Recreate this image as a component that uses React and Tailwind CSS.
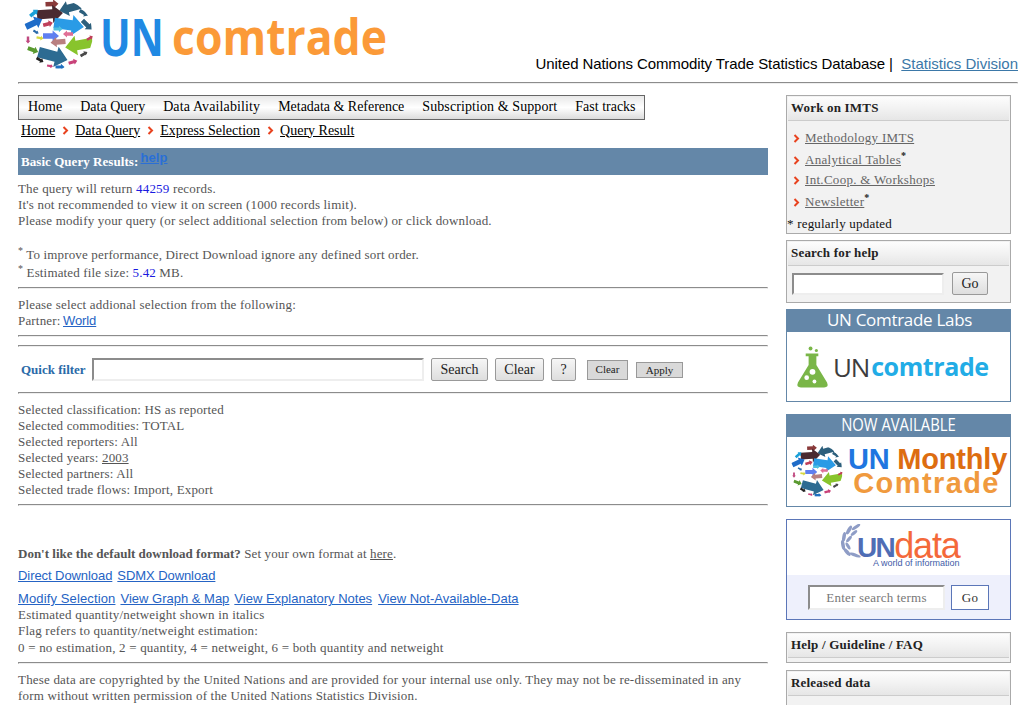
import React from 'react'

function Rule({ className = '' }) {
  return <div className={`h-[2px] border border-[#8c8c8c] border-r-[#ddd] border-b-[#eee] ${className}`} />
}

function Chevron({ className = '' }) {
  return (
    <svg viewBox="0 0 7 9" className={`w-[7px] h-[9px] shrink-0 ${className}`}>
      <path d="M1.5 1 L5 4.5 L1.5 8" fill="none" stroke="#e8431f" strokeWidth="2" />
    </svg>
  )
}

function Arrow({ x, y, s = 1, r = 0, fill }) {
  return (
    <path
      transform={`translate(${x} ${y}) rotate(${r}) scale(${s})`}
      d="M-10 -3.5 L2 -3.5 L2 -7 L10 0 L2 7 L2 3.5 L-10 3.5 Z"
      fill={fill}
    />
  )
}

// page coordinates of the logo, 80x72 box from the left of the header
function Globe({ className = '' }) {
  return (
    <svg viewBox="0 0 80 72" className={className}>
      <clipPath id="globe-clip"><circle cx="38" cy="34" r="35" /></clipPath>
      <g clipPath="url(#globe-clip)">
        <Arrow x={32} y={4} s={0.65} r={-3} fill="#8a3a3a" />
        <Arrow x={50} y={8} s={1.1} r={165} fill="#2c5f7c" />
        <Arrow x={30} y={14} s={1.3} r={-4} fill="#4a2a30" />
        <Arrow x={14} y={13} s={0.5} r={-40} fill="#1aa0d8" />
        <Arrow x={14} y={23} s={0.9} r={-25} fill="#1f6cc8" />
        <Arrow x={64} y={13} s={0.5} r={30} fill="#2c5f7c" />
        <Arrow x={49} y={25} s={1.5} r={8} fill="#2a9be6" />
        <Arrow x={67} y={25} s={0.65} r={45} fill="#2c5f7c" />
        <Arrow x={28} y={24} s={0.5} r={-15} fill="#c0405a" />
        <Arrow x={38} y={29} s={0.45} r={0} fill="#4fc0e0" />
        <Arrow x={31} y={36} s={0.8} r={0} fill="#5f7ff0" />
        <Arrow x={48} y={34} s={0.5} r={180} fill="#e06f95" />
        <Arrow x={16} y={32} s={0.3} r={30} fill="#2a6aa8" />
        <Arrow x={8} y={40} s={0.35} r={90} fill="#c04a80" />
        <Arrow x={20} y={38} s={0.35} r={10} fill="#d8d840" />
        <Arrow x={38} y={42} s={0.75} r={175} fill="#b98080" />
        <Arrow x={59} y={45} s={1.4} r={170} fill="#88c42c" />
        <Arrow x={13} y={50} s={0.55} r={20} fill="#5a9a30" />
        <Arrow x={33} y={56} s={1.5} r={15} fill="#2d6b92" />
        <Arrow x={70} y={38} s={0.35} r={-30} fill="#c0405a" />
        <Arrow x={20} y={60} s={0.4} r={30} fill="#222" />
        <Arrow x={53} y={62} s={0.45} r={-15} fill="#c9437a" />
        <Arrow x={64} y={54} s={0.4} r={-30} fill="#4a4a4a" />
        <Arrow x={40} y={67} s={0.45} r={0} fill="#1f6fc0" />
        <Arrow x={30} y={66} s={0.3} r={10} fill="#c9437a" />
      </g>
    </svg>
  )
}

function SideHead({ children }) {
  return (
    <div className="m-px h-[24px] border-b border-[#ccc] bg-gradient-to-b from-[#fdfdfd] via-[#f2f2f2] to-[#e6e6e6] pl-[3px] pb-[1px] flex items-center font-bold text-[13px] text-[#222] tracking-[0.2px]">
      {children}
    </div>
  )
}

function SideBox({ title, className = '', children }) {
  return (
    <div className={`border border-[#aaa] bg-[#f2f2f2] ${className}`}>
      <SideHead>{title}</SideHead>
      {children}
    </div>
  )
}

function SideLink({ children, star, className = 'h-[22px]' }) {
  return (
    <div className={`flex items-center pl-[6px] gap-[5px] ${className}`}>
      <Chevron />
      <span className="text-[13px] tracking-[0.3px]">
        <a className="underline text-[#666]">{children}</a>
        {star && <sup className="text-[10px] text-[#222] font-bold">*</sup>}
      </span>
    </div>
  )
}

function Banner({ title, className = '', titleClass = '', children }) {
  return (
    <div className={`border border-[#6487a8] ${className}`}>
      <div className="h-[21px] bg-[#6487a8] text-white flex items-center justify-center font-['Open_Sans',sans-serif] pb-[2px]">
        <span className={titleClass}>{title}</span>
      </div>
      <div className="bg-white border-t border-[#6487a8]">{children}</div>
    </div>
  )
}

function Btn({ children, className = '' }) {
  return (
    <button className={`h-[23px] border border-[#999] rounded-[2px] bg-gradient-to-b from-[#f6f6f6] to-[#dedede] text-[14px] text-[#222] ${className}`}>
      {children}
    </button>
  )
}

function SmallBtn({ children, className = '' }) {
  return (
    <button className={`border border-[#999] bg-[#d9d9d9] text-[11px] text-[#222] ${className}`}>
      {children}
    </button>
  )
}

const sansLink = "font-['Liberation_Sans',sans-serif] text-[13px] text-[#2563c4] underline"

export default function App() {
  return (
    <div className="w-[1028px] h-[705px] overflow-hidden bg-white font-['Liberation_Serif',serif] text-[13px] text-[#555]">
      {/* Header */}
      <div className="h-[82px] relative">
        <div className="flex pl-[20px]">
          <Globe className="w-[80px] h-[72px] shrink-0" />
          <span className="block w-[72px] origin-left scale-x-[0.78] font-['Open_Sans',sans-serif] font-bold text-[52px] leading-[72px] text-[#2089e3]">UN</span>
          <span className="block origin-left scale-x-[0.89] font-['Open_Sans',sans-serif] font-bold text-[50px] leading-[72px] text-[#fb9a38]">comtrade</span>
        </div>
        <div className="absolute right-[10px] top-[53px] font-['Liberation_Sans',sans-serif] text-[15px] text-black">
          <span className="tracking-[-0.08px]">United Nations Commodity Trade Statistics Database |</span>&nbsp;&nbsp;<a className="underline text-[#3b78a8]">Statistics Division</a>
        </div>
      </div>
      <Rule className="ml-[18px] mr-[10px]" />

      <div className="flex pl-[18px] pt-[11px]">
        {/* Main column */}
        <div className="w-[750px]">
          <div className="w-[627px] h-[25px] border border-[#666] bg-gradient-to-b from-[#e8e8e8] via-white to-[#dcdcdc] flex items-center pl-[9px] pb-[2px] gap-[18px] text-[14px] text-black">
            <span>Home</span>
            <span>Data Query</span>
            <span className="tracking-[0.12px]">Data Availability</span>
            <span className="tracking-[-0.03px]">Metadata &amp; Reference</span>
            <span className="tracking-[0.09px]">Subscription &amp; Support</span>
            <span>Fast tracks</span>
          </div>
          <div className="h-[22px] flex items-center pl-[3px] pb-[2px] text-[14px] text-black gap-[6.5px]">
            <a className="underline">Home</a><Chevron />
            <a className="underline">Data Query</a><Chevron />
            <a className="underline">Express Selection</a><Chevron />
            <a className="underline">Query Result</a>
          </div>

          <div className="mt-[6px] h-[27px] bg-[#6487a8] pl-[3px] text-white font-bold text-[13px] flex items-center tracking-[0.05px]">
            Basic Query Results:&nbsp;
            <a className="underline text-[#2a6fd6] font-['Liberation_Sans',sans-serif] font-bold -mt-[8px] -ml-[1px]">help</a>
          </div>

          <div className="mt-[6px] leading-[16px] tracking-[0.18px]">
            <div>The query will return <span className="text-[#1a1ae0]">44259</span> records.</div>
            <div>It's not recommended to view it on screen (1000 records limit).</div>
            <div>Please modify your query (or select additional selection from below) or click download.</div>
            <div className="mt-[18px] h-[18px] tracking-[0.15px]"><sup className="text-[10px]">*</sup> To improve performance, Direct Download ignore any defined sort order.</div>
            <div className="h-[18px] tracking-[0.15px]"><sup className="text-[10px]">*</sup> Estimated file size: <span className="text-[#1a1ae0]">5.42</span> MB.</div>
          </div>
          <Rule className="mt-[4px]" />
          <div className="mt-[8px] leading-[16px] tracking-[0.18px]">
            <div>Please select addional selection from the following:</div>
            <div>Partner: <a className={sansLink + ' tracking-[-0.1px] -ml-[1px]'}>World</a></div>
          </div>
          <Rule className="mt-[6px]" />
          <Rule className="mt-[8px]" />

          <div className="h-[45px] flex items-center pl-[3px]">
            <span className="font-bold text-[#2a6aa8] w-[71px]">Quick filter</span>
            <input className="w-[332px] h-[23px] bg-white border-2 border-[#8c8c8c] border-r-[#eee] border-b-[#eee]" />
            <Btn className="ml-[7px] w-[57px]">Search</Btn>
            <Btn className="ml-[7px] w-[49px]">Clear</Btn>
            <Btn className="ml-[7px] w-[25px]">?</Btn>
            <SmallBtn className="ml-[11px] w-[41px] h-[20px]">Clear</SmallBtn>
            <SmallBtn className="ml-[8px] w-[47px] h-[16px] leading-[14px]">Apply</SmallBtn>
          </div>
          <Rule />

          <div className="mt-[8px] leading-[16px] tracking-[0.15px]">
            <div>Selected classification: HS as reported</div>
            <div>Selected commodities: TOTAL</div>
            <div>Selected reporters: All</div>
            <div>Selected years: <a className="underline">2003</a></div>
            <div>Selected partners: All</div>
            <div>Selected trade flows: Import, Export</div>
          </div>
          <Rule className="mt-[6px]" />

          <div className="mt-[40px] leading-[16px] tracking-[0.12px]">
            <span className="font-bold tracking-normal">Don't like the default download format?</span> Set your own format at <a className="underline">here</a>.
          </div>
          <div className="mt-[6px] leading-[16px] flex gap-[5px]">
            <a className={sansLink + ' tracking-[-0.07px]'}>Direct Download</a>
            <a className={sansLink + ' tracking-[-0.07px]'}>SDMX Download</a>
          </div>
          <div className="mt-[7px] leading-[16px] flex gap-[5px]">
            <a className={sansLink + ' tracking-[0.13px]'}>Modify Selection</a>
            <a className={sansLink}>View Graph &amp; Map</a>
            <a className={sansLink}>View Explanatory Notes</a>
            <a className={sansLink + ' ml-[1px]'}>View Not-Available-Data</a>
          </div>
          <div className="leading-[16px] tracking-[0.2px]">
            <div>Estimated quantity/netweight shown in italics</div>
            <div>Flag refers to quantity/netweight estimation:</div>
            <div className="mt-px">0 = no estimation, 2 = quantity, 4 = netweight, 6 = both quantity and netweight</div>
          </div>
          <Rule className="mt-[6px]" />
          <div className="mt-[8px] leading-[16px] tracking-[0.19px]">
            These data are copyrighted by the United Nations and are provided for your internal use only. They may not be re-disseminated in any form without written permission of the United Nations Statistics Division.
          </div>
        </div>

        {/* Sidebar */}
        <div className="ml-[18px] w-[225px] flex flex-col">
          <SideBox title="Work on IMTS" className="h-[139px]">
            <div className="pt-[5px]">
              <SideLink>Methodology IMTS</SideLink>
              <SideLink star>Analytical Tables</SideLink>
              <SideLink className="h-[20px] pb-[2px]">Int.Coop. &amp; Workshops</SideLink>
              <SideLink star>Newsletter</SideLink>
              <div className="h-[22px] flex items-center text-[13px] text-[#111] tracking-[0.2px]">* regularly updated</div>
            </div>
          </SideBox>
          <SideBox title="Search for help" className="mt-[6px] h-[63px]">
            <div className="flex items-center pl-[5px] pt-[5px]">
              <input className="w-[152px] h-[22px] bg-white border-2 border-[#8c8c8c] border-r-[#eee] border-b-[#eee]" />
              <Btn className="ml-[8px] w-[36px]">Go</Btn>
            </div>
          </SideBox>

          <Banner title="UN Comtrade Labs" titleClass="text-[17px] tracking-[-0.3px] pl-[2px]" className="mt-[6px] h-[93px]">
            <div className="h-[69px] flex items-center pl-[9px]">
              <svg viewBox="0 0 34 44" className="w-[33px] h-[44px] shrink-0">
                <circle cx="15" cy="3" r="2" fill="#7ab648" />
                <circle cx="21" cy="5" r="1.6" fill="#7ab648" />
                <path d="M10 8 H23 V11 H21 V20 L32 38 Q34 43 29 43 H5 Q0 43 2 38 L13 20 V11 H10 Z" fill="#7ab648" />
                <circle cx="17" cy="27" r="3" fill="#fff" />
                <circle cx="11" cy="33" r="2.4" fill="#fff" />
                <circle cx="19" cy="37" r="2" fill="#fff" />
              </svg>
              <span className="ml-[4px] font-['Open_Sans',sans-serif] text-[26px] leading-none text-[#3d3d3d] tracking-[-1.2px]">UN</span>
              <span className="ml-[2px] font-['Open_Sans',sans-serif] font-bold text-[25px] leading-none text-[#22ace6] tracking-[-0.4px]">comtrade</span>
            </div>
          </Banner>

          <Banner title="NOW AVAILABLE" titleClass="inline-block text-[19px] scale-x-[0.78] whitespace-nowrap" className="mt-[12px] h-[93px]">
            <div className="h-[69px] flex items-center">
              <Globe className="ml-[1px] w-[60px] h-[54px] shrink-0" />
              <div className="font-['Liberation_Sans',sans-serif] font-bold text-center leading-[24px] text-[29px] -mt-[1px]">
                <div className="whitespace-nowrap tracking-[-0.2px]"><span className="text-[#1f76e0]">UN</span> <span className="text-[#dd6d10]">Monthly</span></div>
                <div className="text-[#f09a3e] tracking-[1.4px] whitespace-nowrap -ml-[2px]">Comtrade</div>
              </div>
            </div>
          </Banner>

          <div className="mt-[12px] h-[101px] border border-[#5b76b8] flex flex-col">
            <div className="h-[55px] bg-white flex flex-col pl-[51px] pt-[4px]">
              <div className="flex items-end h-[36px]">
                <svg viewBox="0 0 26 36" className="w-[26px] h-[36px] -mr-[7px] shrink-0">
                  <g fill="#8f9dc6">
                    <ellipse cx="18" cy="3" rx="5" ry="1.6" transform="rotate(-35 18 3)" />
                    <ellipse cx="11" cy="6" rx="5" ry="1.8" transform="rotate(-60 11 6)" />
                    <ellipse cx="16" cy="9" rx="4" ry="1.6" transform="rotate(-40 16 9)" />
                    <ellipse cx="6" cy="13" rx="5" ry="1.8" transform="rotate(-80 6 13)" />
                    <ellipse cx="11" cy="15" rx="4" ry="1.6" transform="rotate(-50 11 15)" />
                    <ellipse cx="5" cy="21" rx="5" ry="1.8" transform="rotate(80 5 21)" />
                    <ellipse cx="10" cy="22" rx="4" ry="1.6" transform="rotate(60 10 22)" />
                    <ellipse cx="9" cy="28" rx="5" ry="1.8" transform="rotate(50 9 28)" />
                    <ellipse cx="17" cy="31" rx="6" ry="1.7" transform="rotate(20 17 31)" />
                  </g>
                </svg>
                <span className="font-['Liberation_Sans',sans-serif] font-bold text-[28px] leading-[28px] text-[#4f6db5] tracking-[-1.6px] mb-[-2px]">UN</span>
                <span className="font-['Liberation_Sans',sans-serif] text-[36px] leading-[28px] text-[#f4693a] tracking-[-1.2px]">data</span>
              </div>
              <div className="ml-[35px] -mt-[1px] font-['Liberation_Sans',sans-serif] text-[9px] leading-[8px] text-[#3f5ca8]">A world of information</div>
            </div>
            <div className="flex-1 bg-[#eef0fc] flex items-center pl-[21px] pt-[1px]">
              <input placeholder="Enter search terms" className="w-[137px] h-[25px] bg-white border-2 border-[#8c8c8c] border-r-[#eee] border-b-[#eee] text-center text-[13px] tracking-[0.2px] placeholder:text-[#777]" />
              <button className="ml-[6px] w-[38px] h-[25px] bg-white border border-[#5b76b8] text-[13px] text-[#333] tracking-[0.2px]">Go</button>
            </div>
          </div>

          <SideBox title="Help / Guideline / FAQ" className="mt-[12px] h-[31px]" />
          <SideBox title="Released data" className="mt-[7px] h-[40px]" />
        </div>
      </div>
    </div>
  )
}
